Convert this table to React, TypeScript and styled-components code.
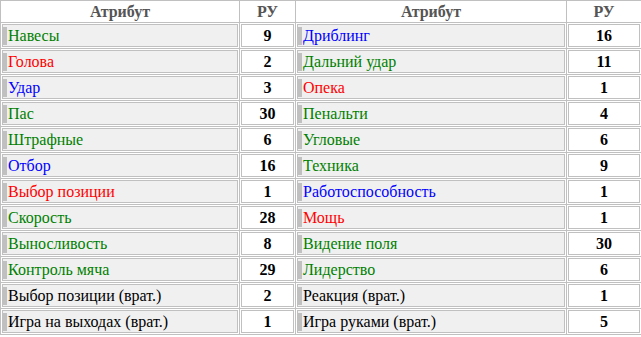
import styled, { createGlobalStyle } from 'styled-components';

const GlobalStyle = createGlobalStyle`
  body {
    margin: 0;
    background: #fff;
  }
`;

const Table = styled.div`
  display: grid;
  grid-template-columns: 238px 55px 270px 74px;
  grid-template-rows: 21px;
  grid-auto-rows: 25px;
  gap: 1px;
  width: fit-content;
  background: #c0c0c0;
  border: 1px solid #c0c0c0;
  font-family: "Liberation Serif", "Times New Roman", "DejaVu Serif", serif;
`;

const Head = styled.div`
  background: #fff;
  display: flex;
  align-items: center;
  justify-content: center;
  font-size: 16px;
  font-weight: bold;
  color: #555;
`;

const Cell = styled.div`
  background: #fff;
  padding: 1px;
`;

const NameBox = styled.div<{ $color: string }>`
  height: 100%;
  box-sizing: border-box;
  display: flex;
  align-items: center;
  background: #f0f0f0;
  border: 1px solid #c0c0c0;
  color: ${p => p.$color};
  font-size: 16px;
  white-space: nowrap;
`;

const Bar = styled.span`
  width: 4px;
  align-self: stretch;
  margin: 2px 1px 1px 0;
  background: #c0c0c0;
`;

const ValueBox = styled.div`
  height: 100%;
  box-sizing: border-box;
  display: flex;
  align-items: center;
  justify-content: center;
  border: 1px solid #c0c0c0;
  font-size: 16px;
  font-weight: bold;
  color: #000;
`;

const G = '#008000';
const R = '#ff0000';
const B = '#0000ff';
const K = '#000000';

type Attr = [string, string, number];

const rows: [Attr, Attr][] = [
  [['Навесы', G, 9], ['Дриблинг', B, 16]],
  [['Голова', R, 2], ['Дальний удар', G, 11]],
  [['Удар', B, 3], ['Опека', R, 1]],
  [['Пас', G, 30], ['Пенальти', G, 4]],
  [['Штрафные', G, 6], ['Угловые', G, 6]],
  [['Отбор', B, 16], ['Техника', G, 9]],
  [['Выбор позиции', R, 1], ['Работоспособность', B, 1]],
  [['Скорость', G, 28], ['Мощь', R, 1]],
  [['Выносливость', G, 8], ['Видение поля', G, 30]],
  [['Контроль мяча', G, 29], ['Лидерство', G, 6]],
  [['Выбор позиции (врат.)', K, 2], ['Реакция (врат.)', K, 1]],
  [['Игра на выходах (врат.)', K, 1], ['Игра руками (врат.)', K, 5]],
];

function AttrCells({ attr }: { attr: Attr }) {
  const [name, color, value] = attr;
  return (
    <>
      <Cell>
        <NameBox $color={color}>
          <Bar />
          {name}
        </NameBox>
      </Cell>
      <Cell>
        <ValueBox>{value}</ValueBox>
      </Cell>
    </>
  );
}

function App() {
  return (
    <>
      <GlobalStyle />
      <Table>
        <Head>Атрибут</Head>
        <Head>РУ</Head>
        <Head>Атрибут</Head>
        <Head>РУ</Head>
        {rows.flatMap(([left, right], i) => [
          <AttrCells key={`l${i}`} attr={left} />,
          <AttrCells key={`r${i}`} attr={right} />,
        ])}
      </Table>
    </>
  );
}

export default App;
